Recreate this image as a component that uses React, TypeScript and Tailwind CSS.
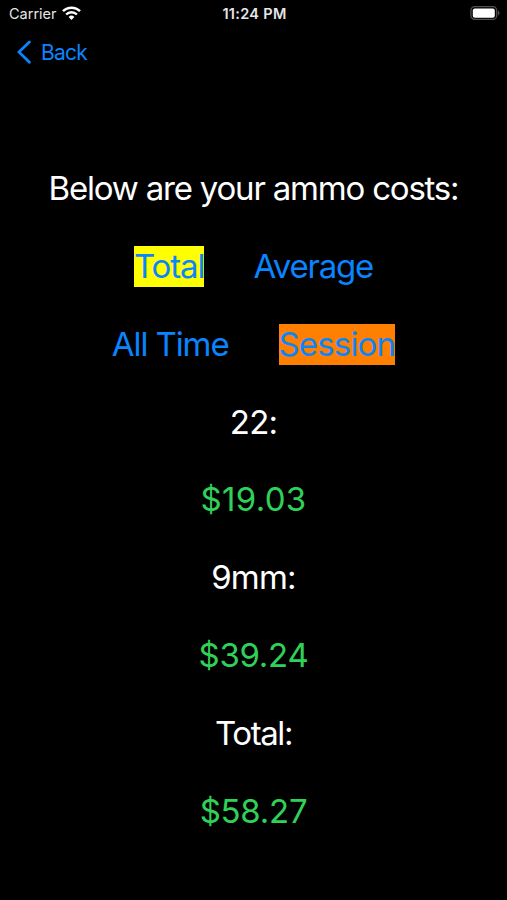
import React from "react";

type CostProps = {
  label: string;
  amount: string;
  labelClass: string;
  amountClass: string;
};

const costs: CostProps[] = [
  { label: "22:", amount: "$19.03", labelClass: "tracking-[-0.8px]", amountClass: "tracking-[0.3px]" },
  { label: "9mm:", amount: "$39.24", labelClass: "tracking-[-0.8px]", amountClass: "tracking-[-0.3px]" },
  { label: "Total:", amount: "$58.27", labelClass: "tracking-[-1.4px]", amountClass: "tracking-[-0.25px]" },
];

const StatusBar = () => {
  return (
    <div className="grid h-7 grid-cols-3 items-center pl-[9px] pr-[7px] text-[14.5px] leading-7">
      <div className="flex items-center gap-[5px] text-[#e6e6e6]">
        <span>Carrier</span>
        <svg viewBox="0 0 19 14" className="-mt-[2px] h-[14px] w-[19px]" fill="none" stroke="#fff">
          <path d="M1 5.2a12 12 0 0 1 17 0" strokeWidth="2.5" />
          <path d="M4.1 8.5a7.6 7.6 0 0 1 10.8 0" strokeWidth="2.3" />
          <path d="M6.6 11a4.1 4.1 0 0 1 5.8 0L9.5 14z" fill="#fff" stroke="none" />
        </svg>
      </div>
      <span className="text-center font-semibold tracking-[0.3px] text-[#e6e6e6]">11:24 PM</span>
      <svg viewBox="0 0 30 14" className="-mt-[2px] h-[14px] w-[30px] justify-self-end">
        <rect x="0.9" y="0.5" width="25.8" height="13" rx="4" fill="none" stroke="#505050" strokeWidth="1.3" />
        <rect x="2.8" y="2.4" width="22" height="9.4" rx="2" fill="#fff" />
        <path d="M28 4.5c2 .8 2 4.2 0 5z" fill="#505050" />
      </svg>
    </div>
  );
};

const Cost = ({ label, amount, labelClass, amountClass }: CostProps) => {
  return (
    <>
      <p className={labelClass}>{label}</p>
      <p className={`text-[#30d158] ${amountClass}`}>{amount}</p>
    </>
  );
};

const App: React.FC = () => {
  return (
    <div className="h-[900px] w-full overflow-hidden bg-black font-['Inter','Liberation_Sans',sans-serif] text-white">
      <StatusBar />
      <button className="ml-[17px] flex h-12 items-center gap-[10px] text-[21px] tracking-[-0.75px] text-[#0a84ff]">
        <svg viewBox="0 0 14 24" className="h-6 w-[14px]" fill="none" stroke="currentColor" strokeWidth="2.8">
          <path d="M12.4 2 1.9 12l10.5 10.3" strokeLinecap="round" strokeLinejoin="miter" />
        </svg>
        <span className="pt-[2px]">Back</span>
      </button>
      <main className="mt-[92px] flex flex-col items-center gap-[36.85px] whitespace-nowrap text-[33px] leading-[41px]">
        <h1 className="tracking-[-1.2px]">Below are your ammo costs:</h1>
        <div className="flex gap-[49px] text-[#0a84ff]">
          <button className="bg-[#ffff00] tracking-[-1.1px]">Total</button>
          <button className="tracking-[-1.2px]">Average</button>
        </div>
        <div className="flex gap-[50px] text-[#0a84ff]">
          <button className="tracking-[-1.1px]">All Time</button>
          <button className="bg-[#ff8000] tracking-[-0.85px]">Session</button>
        </div>
        {costs.map((cost) => (
          <Cost key={cost.label} {...cost} />
        ))}
      </main>
    </div>
  );
};

export default App;
